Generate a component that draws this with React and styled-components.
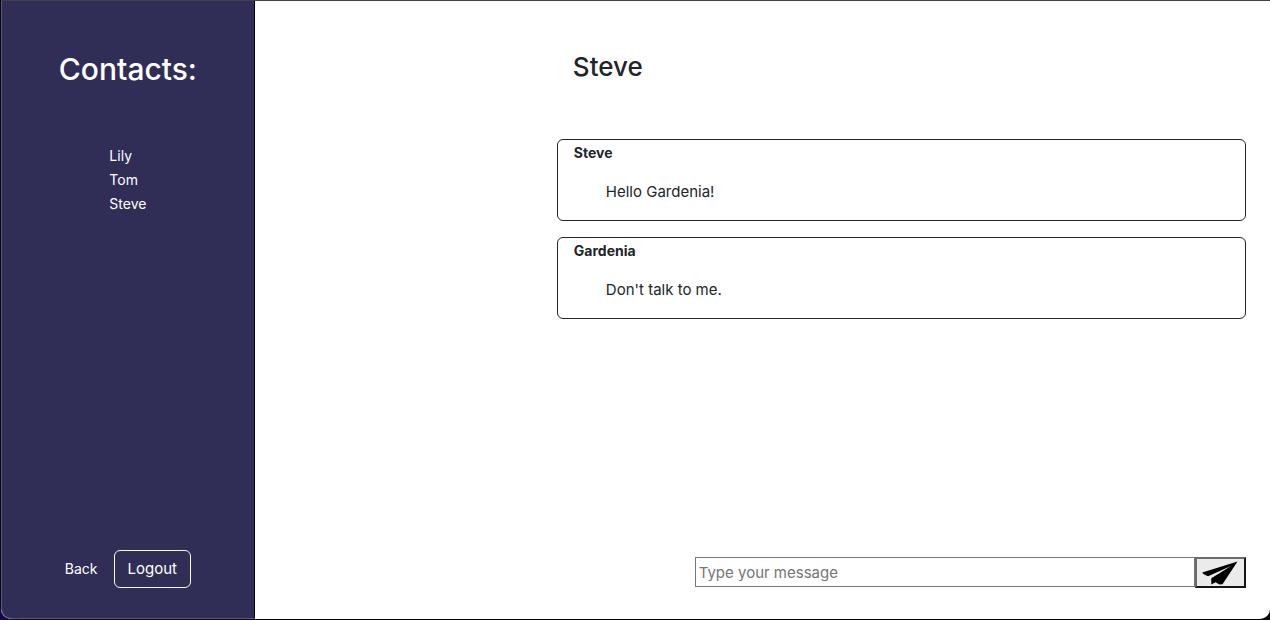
import React from "react";
import styled, { createGlobalStyle } from "styled-components";

const GlobalStyle = createGlobalStyle`
  *, *::before, *::after { box-sizing: border-box; }
  body {
    margin: 0;
    background: #08060c;
    color: #212529;
    font-family: Inter, "Liberation Sans", sans-serif;
    font-size: 15px;
    line-height: 24px;
  }
  h1, h2, h3, p, ul { margin: 0; padding: 0; font-size: inherit; }
`;

const Frame = styled.div`
  min-height: 100vh;
  display: flex;
  padding: 0 0 1px 1px;
  background: radial-gradient(circle at 0 100%, #1b0550, #08060c 24px);
`;

const Window = styled.div`
  flex: 1;
  display: flex;
  border-top: 1px solid #424242;
  border-radius: 0 0 10px 10px;
  background: #fff;
  overflow: hidden;
`;

const Sidebar = styled.nav`
  flex: 0 0 20%;
  display: flex;
  flex-direction: column;
  align-items: center;
  padding: 48px 0 30px;
  background: #302e56;
  color: #fff;
  border: solid #5c5a78;
  border-width: 0 0 1px 1px;
  border-right: 1px solid #000;
  border-bottom-left-radius: 10px;
`;

const SidebarTitle = styled.h1`
  font-size: 30px;
  line-height: 40px;
  font-weight: 500;
`;

const ContactList = styled.ul`
  list-style: none;
  margin-top: 55px;
`;

const TextLink = styled.a`
  display: block;
  color: #fff;
  font-size: 14px;
  line-height: 24px;
  text-decoration: none;
`;

const SidebarActions = styled.div`
  display: flex;
  align-items: center;
  gap: 16px;
  margin-top: auto;
`;

const LogoutButton = styled.button`
  padding: 6px 13px;
  border: 1px solid #f8f9fa;
  border-radius: 6px;
  background: transparent;
  color: #fff;
  font: inherit;
`;

const Main = styled.main`
  flex: 1;
  display: grid;
  grid-template-columns: 302fr 689fr;
  padding: 48px 24px 31px 0;
`;

const Conversation = styled.section`
  grid-column: 2;
  display: flex;
  flex-direction: column;
`;

const ConversationTitle = styled.h2`
  padding: 0 16px;
  margin-bottom: 54px;
  font-size: 26px;
  line-height: 36px;
  font-weight: 500;
`;

const Message = styled.article`
  margin-bottom: 16px;
  padding: 0 16px 16px;
  border: 1px solid #212529;
  border-radius: 6px;
`;

const Author = styled.h3`
  font-size: 14px;
  line-height: 26px;
  font-weight: 700;
`;

const MessageText = styled.p`
  padding: 14px 32px 0;
`;

const Composer = styled.form`
  display: flex;
  align-items: flex-start;
  width: 80%;
  margin-top: auto;
  margin-left: auto;
`;

const MessageInput = styled.input`
  flex: 1;
  min-width: 0;
  height: 30px;
  padding: 0 3px;
  border: 1px solid #767676;
  border-radius: 0;
  background: #fff;
  color: inherit;
  font: inherit;
  &::placeholder { color: #757575; opacity: 1; }
`;

const SendButton = styled.button`
  display: flex;
  align-items: center;
  justify-content: center;
  width: 51px;
  height: 31px;
  padding: 0;
  border: 2px solid;
  border-color: #6b6b6b #161616 #161616 #6b6b6b;
  background: #ebebeb;
  color: #000;
`;

const contacts = ["Lily", "Tom", "Steve"];

const messages = [
  { author: "Steve", text: "Hello Gardenia!" },
  { author: "Gardenia", text: "Don't talk to me." },
];

function PaperPlane() {
  return (
    <svg width="36" height="25" viewBox="0 0 36 25" fill="currentColor" aria-hidden="true">
      <path d="M35.5 1.5 0.3 12.6 1.3 14 6 16.3 29 6 9.3 18.2V24.5L13.5 22.3 17.5 24.6 20.5 24.2Z" />
    </svg>
  );
}

export default function App() {
  return (
    <>
      <GlobalStyle />
      <Frame>
        <Window>
          <Sidebar>
            <SidebarTitle>Contacts:</SidebarTitle>
            <ContactList>
              {contacts.map((name) => (
                <li key={name}>
                  <TextLink href={`#${name}`}>{name}</TextLink>
                </li>
              ))}
            </ContactList>
            <SidebarActions>
              <TextLink href="#back">Back</TextLink>
              <LogoutButton type="button">Logout</LogoutButton>
            </SidebarActions>
          </Sidebar>
          <Main>
            <Conversation>
              <ConversationTitle>Steve</ConversationTitle>
              {messages.map(({ author, text }) => (
                <Message key={author}>
                  <Author>{author}</Author>
                  <MessageText>{text}</MessageText>
                </Message>
              ))}
              <Composer onSubmit={(event) => event.preventDefault()}>
                <MessageInput type="text" aria-label="Message" placeholder="Type your message" />
                <SendButton type="submit" aria-label="Send">
                  <PaperPlane />
                </SendButton>
              </Composer>
            </Conversation>
          </Main>
        </Window>
      </Frame>
    </>
  );
}
